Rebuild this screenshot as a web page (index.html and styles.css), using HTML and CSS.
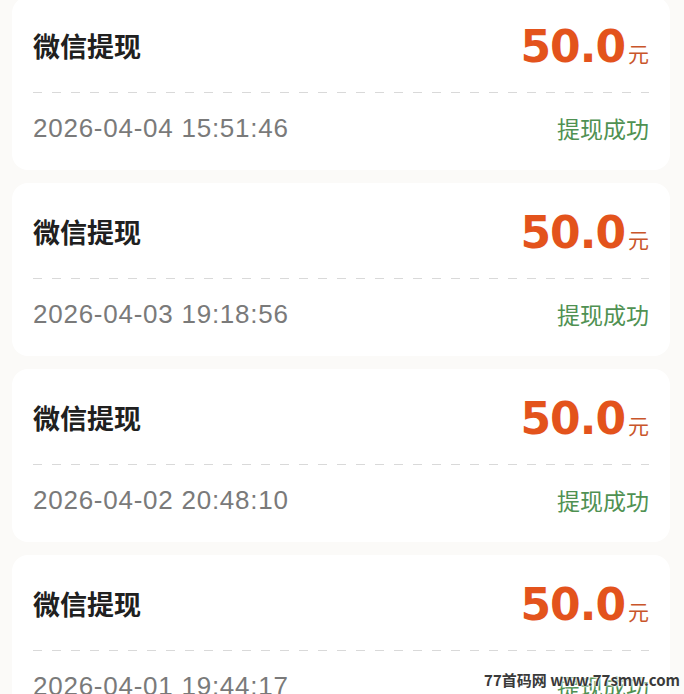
FILE: index.html
```html
<!DOCTYPE html>
<html lang="zh-CN">
<head>
<meta charset="utf-8">
<title>提现记录</title>
<link rel="stylesheet" href="styles.css">
</head>
<body>
<div class="list">
  <div class="card">
    <div class="head"><span class="title">微信提现</span><span class="amount">50.0<span class="unit">元</span></span></div>
    <div class="dash"></div>
    <div class="foot"><span class="date">2026-04-04 15:51:46</span><span class="status">提现成功</span></div>
  </div>
  <div class="card">
    <div class="head"><span class="title">微信提现</span><span class="amount">50.0<span class="unit">元</span></span></div>
    <div class="dash"></div>
    <div class="foot"><span class="date">2026-04-03 19:18:56</span><span class="status">提现成功</span></div>
  </div>
  <div class="card">
    <div class="head"><span class="title">微信提现</span><span class="amount">50.0<span class="unit">元</span></span></div>
    <div class="dash"></div>
    <div class="foot"><span class="date">2026-04-02 20:48:10</span><span class="status">提现成功</span></div>
  </div>
  <div class="card">
    <div class="head"><span class="title">微信提现</span><span class="amount">50.0<span class="unit">元</span></span></div>
    <div class="dash"></div>
    <div class="foot"><span class="date">2026-04-01 19:44:17</span><span class="status">提现成功</span></div>
  </div>
</div>
<div class="watermark">77首码网 www.77smw.com</div>
</body>
</html>
```
FILE: styles.css
```css
html, body {
  margin: 0;
  padding: 0;
  height: 100%;
  overflow: hidden;
}
body {
  background: #fbfaf8;
  font-family: "Liberation Sans", "Noto Sans CJK SC", sans-serif;
  position: relative;
}
.list {
  display: flex;
  flex-direction: column;
  gap: 13px;
  padding: 0 14px 0 12px;
  margin-top: -3px;
}
.card {
  background: #ffffff;
  border-radius: 16px;
  padding: 26px 21px 24px 21px;
}
.head {
  display: flex;
  justify-content: space-between;
  align-items: center;
  height: 48px;
}
.title {
  font-family: "Noto Sans CJK SC", sans-serif;
  font-weight: 700;
  font-size: 27px;
  color: #202020;
  line-height: 1;
  margin-top: -4px;
}
.amount {
  font-family: "DejaVu Sans", sans-serif;
  font-weight: 700;
  font-size: 44px;
  color: #e3531c;
  line-height: 1;
  letter-spacing: -1px;
}
.unit {
  font-family: "Noto Sans CJK SC", sans-serif;
  font-weight: 400;
  font-size: 21px;
  color: #c9552a;
  margin-left: 3px;
  letter-spacing: 0;
}
.dash {
  height: 1px;
  margin-top: 21px;
  background: repeating-linear-gradient(to right, #d9d9d9 0 9px, transparent 9px 19px);
}
.foot {
  display: flex;
  justify-content: space-between;
  align-items: center;
  height: 36px;
  margin-top: 17px;
}
.date {
  font-size: 26px;
  color: #7a7a7a;
  line-height: 1;
  letter-spacing: 0.75px;
}
.status {
  font-family: "Noto Sans CJK SC", sans-serif;
  font-size: 23px;
  color: #4f9152;
  line-height: 1;
}
.watermark {
  position: absolute;
  right: 4px;
  bottom: 4px;
  font-family: "Noto Sans CJK SC", sans-serif;
  font-weight: 700;
  font-size: 15px;
  color: #3a3a3a;
  line-height: 20px;
  text-shadow: 0 0 2px #fff, 0 0 2px #fff, 0 0 3px #fff;
}
```
